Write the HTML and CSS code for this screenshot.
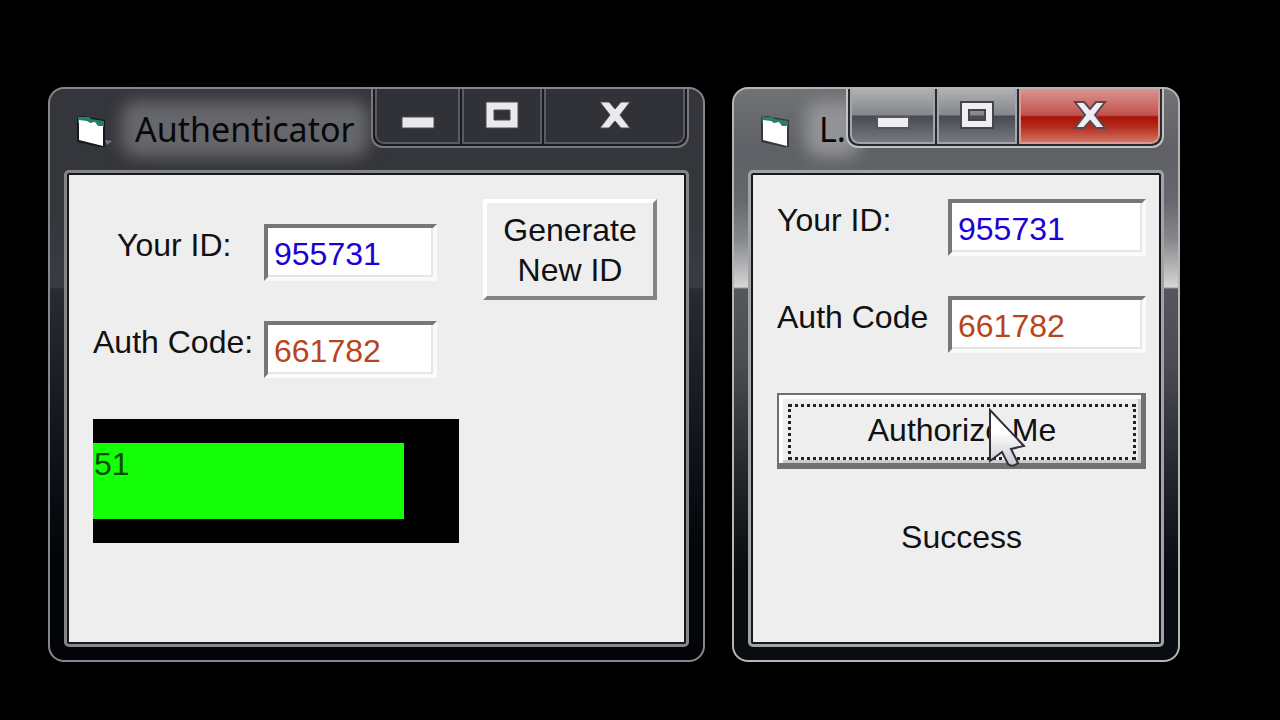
FILE: index.html
```
<!DOCTYPE html>
<html lang="en">
<head>
  <meta charset="UTF-8">
  <meta name="viewport" content="width=device-width, initial-scale=1.0">
  <title>Authenticator</title>
  <link rel="stylesheet" href="styles.css">
</head>
<body>
  <section class="window window-main">
    <header class="titlebar">
      <svg class="app-icon" width="36" height="34" viewBox="0 0 36 34">
        <path d="M0 2 6 1 28 5 28 32 23 32 0 27Z" fill="#15191b"/>
        <path d="M1 2 12 2 14 4 27 6 27 12 1 8Z" fill="#287f6b"/>
        <path d="M2 5 10 6 13 8 18 7 21 11 26 11 26 31 2 25Z" fill="#fff"/>
        <path d="M28 25 35 26 30 30Z" fill="#77797d"/>
      </svg>
      <h1 class="title">Authenticator</h1>
      <div class="caption-buttons">
        <button type="button" class="cap min" aria-label="Minimize">
          <svg width="36" height="32" viewBox="0 0 36 32"><rect x="2" y="17" width="32" height="11" fill="#e9e9ee" stroke="#4c4d54" stroke-width="1"/></svg>
        </button>
        <button type="button" class="cap max" aria-label="Maximize">
          <svg width="36" height="32" viewBox="0 0 36 32"><path d="M2 2H34V28H2ZM10 10V20H26V10Z" fill="#e9e9ee" fill-rule="evenodd" stroke="#4c4d54" stroke-width="1"/></svg>
        </button>
        <button type="button" class="cap close" aria-label="Close">
          <svg width="36" height="32" viewBox="0 0 36 32"><path d="M3 2H12L18 9 24 2H33L23 15 33 28H24L18 21 12 28H3L13 15Z" fill="#e9e9ee" stroke="#4c4d54" stroke-width="1"/></svg>
        </button>
      </div>
    </header>
    <main class="client">
      <div class="top">
        <form class="fields">
          <label for="main-id" class="indent">Your ID:</label>
          <input type="text" id="main-id" class="id" value="955731">
          <label for="main-code">Auth Code:</label>
          <input type="text" id="main-code" class="code" value="661782">
        </form>
        <button type="button" class="btn generate">Generate New ID</button>
      </div>
      <div class="timer" role="progressbar" aria-label="Time left" aria-valuemin="0" aria-valuemax="60" aria-valuenow="51">
        <div class="timer-bar" style="width: 85%">51</div>
      </div>
    </main>
  </section>

  <section class="window window-login active">
    <header class="titlebar">
      <svg class="app-icon" width="36" height="34" viewBox="0 0 36 34">
        <path d="M0 2 6 1 28 5 28 32 23 32 0 27Z" fill="#35383b"/>
        <path d="M1 2 12 2 14 4 27 6 27 12 1 8Z" fill="#287f6b"/>
        <path d="M2 5 10 6 13 8 18 7 21 11 26 11 26 31 2 25Z" fill="#fff"/>
      </svg>
      <h1 class="title">L.</h1>
      <div class="caption-buttons">
        <button type="button" class="cap min" aria-label="Minimize">
          <svg width="36" height="32" viewBox="0 0 36 32"><rect x="2" y="17" width="32" height="11" fill="#efeff3" stroke="#55565e" stroke-width="2"/></svg>
        </button>
        <button type="button" class="cap max" aria-label="Maximize">
          <svg width="36" height="32" viewBox="0 0 36 32"><path d="M2 2H34V28H2ZM10 10V20H26V10Z" fill="#efeff3" fill-rule="evenodd" stroke="#44454e" stroke-width="2"/></svg>
        </button>
        <button type="button" class="cap close" aria-label="Close">
          <svg width="36" height="32" viewBox="0 0 36 32"><path d="M3 2H12L18 9 24 2H33L23 15 33 28H24L18 21 12 28H3L13 15Z" fill="#efeff3" stroke="#59494f" stroke-width="2"/></svg>
        </button>
      </div>
    </header>
    <main class="client">
      <form class="fields">
        <label for="login-id">Your ID:</label>
        <input type="text" id="login-id" class="id" value="955731">
        <label for="login-code">Auth Code</label>
        <input type="text" id="login-code" class="code" value="661782">
        <button type="button" class="btn authorize">
          <span class="focus">Authorize Me</span>
          <svg class="cursor" width="40" height="62" viewBox="0 0 40 62">
            <defs>
              <linearGradient id="arrow" x1="0" y1="0" x2="0" y2="1">
                <stop offset="0.4" stop-color="#fff"/>
                <stop offset="1" stop-color="#c4c5ce"/>
              </linearGradient>
            </defs>
            <path d="M2 2V53L14 44 20 56Q24 60 30 55L23 41 36 38Z" fill="url(#arrow)" stroke="#30303d" stroke-width="2"/>
          </svg>
        </button>
      </form>
      <p class="status">Success</p>
    </main>
  </section>
</body>
</html>
```
FILE: styles.css
```
* { box-sizing: border-box; }
body { display: flex; gap: 27px; min-height: 100vh; margin: 0; padding: 87px 100px 58px 48px; background: #000; color: #111; font-family: "Liberation Sans", Arial, sans-serif; font-size: 32px; line-height: 40px; }

/* window frame */
.window { display: flex; flex-direction: column; min-width: 0; padding: 0 14px 13px; border: 2px solid #85868a; border-radius: 16px; background: linear-gradient(#35363b 0, #35363b 120px, #3a3b44 198px, #292a34 200px, #14151d 340px, #030409 470px); }
.window-main { flex: 625 1 0; }
.window-login { flex: 416 1 0; }
.window.active { border-color: #b4b5b7; background: linear-gradient(#707276 0, #5f6166 60px, #65676c 110px, #85878a 150px, #d6d6d7 198px, #55575c 200px, #4b4d52 270px, #25282d 380px, #090d12 480px); }
.titlebar { display: flex; align-items: flex-start; height: 81px; }
.app-icon { position: relative; z-index: 1; flex: none; margin: 26px 0 0 13px; }
.title { position: relative; z-index: 0; flex: 1; min-width: 0; margin: 20px 0 0 22px; font: 34px/40px "Noto Sans", "Open Sans", sans-serif; color: #08080b; white-space: nowrap; }

/* soft glow behind the title */
.title::before { content: ""; position: absolute; z-index: -1; inset: -8px -14px; border-radius: 16px; background: #66676b; filter: blur(8px); }
.active .title::before { background: #929396; }

/* caption buttons */
.caption-buttons { position: relative; z-index: 1; display: flex; flex: none; gap: 2px; height: 59px; padding: 0 2px 2px; border: 2px solid #77787d; border-top: 0; border-radius: 0 0 12px 12px; background: #191a1f; }
.window-main .caption-buttons { margin-left: 16px; }
.cap { display: flex; justify-content: center; padding: 11px 0 0; border: 2px solid #5b5c62; border-top: 0; background: #313237; }
.cap.min { width: 85px; border-bottom-left-radius: 9px; }
.cap.max { width: 80px; }
.cap.close { width: 141px; border-bottom-right-radius: 9px; }
.active .caption-buttons { border-color: #c2c3c5; background: #28292e; }
.active .cap { border-color: #a5a6aa; background: linear-gradient(#b0b1b4 0, #85868a 26px, #484a52 27px, #767980 100%); }
.active .cap.close { border-color: #dc9993; background: linear-gradient(#db9490 0, #c1534d 26px, #a91208 28px, #b52c1d 38px, #cf7564 100%); }

/* client area */
.client { flex: 1; margin: 3px; padding: 24px 13px 23px 24px; border: 2px solid #17181c; border-radius: 2px; outline: 3px solid #85868a; background: #eee; }
.active .client { outline-color: #a1a3a6; }
.top { display: flex; align-items: flex-start; gap: 46px; }
.fields { display: grid; grid-template-columns: 171px 1fr; row-gap: 40px; align-items: start; margin: 0; }
.window-main .fields { margin-top: 25px; grid-template-columns: 171px 173px; }
.fields label { padding-top: 1px; white-space: nowrap; }
.fields .indent { padding-left: 24px; }
.fields input { width: 100%; min-width: 0; height: 57px; padding: 4px 6px 0; border: 4px solid; border-color: #777 #fafafa #fafafa #777; border-radius: 0; background: #fff; box-shadow: inset -2px -2px #e6e6e6; font: inherit; outline: 0; }
.fields .id { color: #1c00d4; }
.fields .code { color: #b8441b; }
.btn { padding: 0; border: 4px solid; border-color: #fff #848484 #848484 #fff; border-radius: 0; background: #eee; color: #111; font: inherit; }
.generate { width: 174px; height: 101px; }
.timer { width: 366px; margin-top: 41px; padding: 24px 0; background: #000; }
.timer-bar { height: 76px; padding: 1px 0 0 1px; background: #15ff08; color: #064a03; }
.authorize { position: relative; grid-column: 1 / -1; height: 76px; padding: 9px 5px 3px 9px; border: 2px solid #707070; border-right-width: 5px; border-bottom-width: 6px; box-shadow: inset 4px 4px #fff, inset -3px -3px #ccc; }
.focus { display: block; height: 56px; padding-top: 3px; border: 3px dotted #222; }
.cursor { position: absolute; left: 209px; top: 13px; }
.status { margin: 48px 0 0; text-align: center; }
```
